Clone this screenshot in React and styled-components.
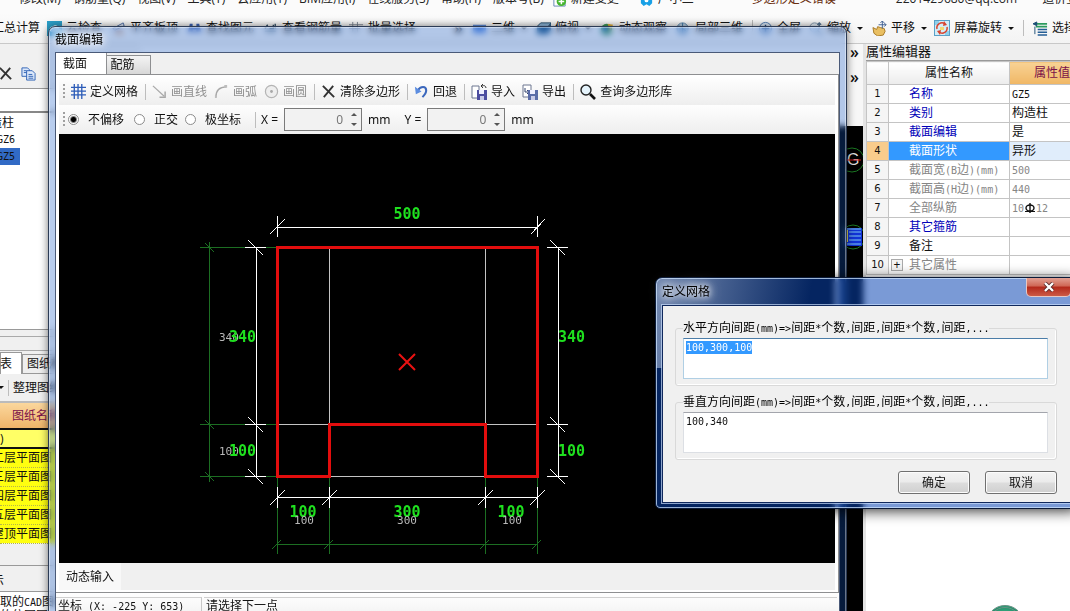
import { useEffect, useRef, useState } from "react";
import styled, { createGlobalStyle, css } from "styled-components";

const GlobalStyle = createGlobalStyle`
  * {
    box-sizing: border-box;
  }
  html, body, #root {
    height: 100%;
    margin: 0;
  }
  body {
    overflow: hidden;
    font-family: "Open Sans", "Noto Sans CJK SC", sans-serif;
    font-size: 12px;
    line-height: 16px;
    color: #111;
    background: #f0f0f0;
  }
  button, input, textarea {
    font: inherit;
    color: inherit;
    margin: 0;
  }
`;

/* ---------- shared bits ---------- */

const Half = styled.span`
  font-family: "DejaVu Sans Mono", monospace;
  font-size: 10px;
`;

// latin runs take half the width of a chinese character
function Mixed({ children }) {
  const parts = children.split(/([\x20-\x7e]+)/).filter(Boolean);
  return parts.map((p, i) =>
    /^[\x20-\x7e]/.test(p) ? <Half key={i}>{p}</Half> : p
  );
}

const PlainButton = styled.button`
  border: 0;
  padding: 0;
  background: none;
  display: flex;
  align-items: center;
  white-space: nowrap;
`;

const Arrow = styled.span`
  width: 8px;
  display: flex;
  justify-content: flex-end;
  &::after {
    content: "";
    border: 3px solid transparent;
    border-top-color: #111;
    border-bottom: 0;
  }
`;

const Svg = ({ children, size = 15, box = 16 }) => (
  <svg
    width={size}
    height={size}
    viewBox={`0 0 ${box} ${box}`}
    fill="none"
    aria-hidden="true"
    style={{ flex: "none" }}
  >
    {children}
  </svg>
);

const icons = {
  cloud: (
    <Svg>
      <rect width="16" height="16" fill="#2a9fc9" />
      <path d="M3 10a3 3 0 0 1 3-4 4 4 0 0 1 7 2 2 2 0 0 1 0 4H5z" fill="#fff" />
    </Svg>
  ),
  level: (
    <Svg>
      <path d="M2 8 13 2l1 3L4 10z" fill="#dfe8f6" stroke="#4d6fa8" />
      <path d="M5 11h8v3H5z" fill="#d99a6c" />
    </Svg>
  ),
  binoculars: (
    <Svg>
      <path d="M3 3h3v4h4V3h3l2 9h-5V9H6v3H1z" fill="#3f66b8" />
    </Svg>
  ),
  steel: (
    <Svg>
      <path d="M2 8l3-4M7 8h4V4M13 8V3M2 11h12" stroke="#2b4a63" strokeWidth="1.4" />
    </Svg>
  ),
  batch: (
    <Svg>
      <path d="M0 4h15M0 8h12M4 1v12M9 1v12" stroke="#7b8592" />
    </Svg>
  ),
  plane2d: (
    <Svg>
      <rect x="1" y="4" width="14" height="9" fill="#5f8fe0" />
    </Svg>
  ),
  topview: (
    <Svg>
      <path d="M5 2h11l-3 4H1z" fill="#8fb8dc" stroke="#1d4668" />
      <path d="M1 6h12v8H1zM13 6l3-4v8l-3 4" fill="#2c6391" />
    </Svg>
  ),
  orbit: (
    <Svg>
      <circle cx="7" cy="9" r="6" fill="#3d9a5b" />
      <path d="M8 3l6 1-3 6z" fill="#e8b43a" />
      <path d="M3 6h5v5H3z" fill="#2d6fc0" />
    </Svg>
  ),
  local3d: (
    <Svg>
      <circle cx="7" cy="8" r="6" fill="#b9cfe2" stroke="#5a86ad" />
      <path d="M7 2v12M3 5l8 6" stroke="#3f77a8" />
    </Svg>
  ),
  fullscreen: (
    <Svg>
      <circle cx="8" cy="8" r="6.5" fill="#dce9f7" stroke="#4c79ae" />
      <path d="M8 4v8M4 8h8" stroke="#234a80" strokeWidth="1.5" />
    </Svg>
  ),
  zoom: (
    <Svg>
      <circle cx="7" cy="7" r="5" fill="#e7f0f8" stroke="#7e95aa" />
      <path d="M12 2v5M10 4l2-2 2 2M11 11l4 4" stroke="#51718f" strokeWidth="1.4" />
    </Svg>
  ),
  pan: (
    <Svg>
      <path
        d="M1 7l4 2 1-3 3 1 4 1 1 3-2 4-6 1-4-3z"
        fill="#e9bf62"
        stroke="#a67722"
      />
      <path d="M11 0v8M7 4h8M9 2l2-2 2 2M13 2l2 2-2 2" stroke="#3d5d90" />
    </Svg>
  ),
  rotate: (
    <Svg size={16}>
      <rect x=".5" y=".5" width="15" height="15" fill="#d4ecf6" stroke="#5aa1c8" />
      <path d="M1 1h4v4H1zM11 11h4v4h-4z" fill="#8fd0ec" />
      <path
        d="M3 9a5 5 0 0 1 8-5M13 7a5 5 0 0 1-8 5"
        stroke="#d8432f"
        strokeWidth="1.5"
      />
      <path d="M10 1l3 4-4 1zM6 15l-3-4 4-1z" fill="#d8432f" />
      <path d="M6 7h4v3H6z" fill="#f3d873" />
    </Svg>
  ),
  floors: (
    <Svg>
      <path d="M3 3h12M3 6h12" stroke="#2c9a5e" strokeWidth="2" />
      <path d="M5 9h10M5 12h10M5 15h10" stroke="#255e95" strokeWidth="1.6" />
      <path d="M0 3l4-2v4zM2 6v8" stroke="#1b4d75" fill="#1b4d75" />
    </Svg>
  ),
  create: (
    <Svg>
      <path d="M2 0h9l3 3v12H2z" fill="#fff" stroke="#6486b4" />
      <circle cx="10" cy="10" r="5" fill="#45b52f" />
      <path d="M10 7v6M7 10h6" stroke="#fff" strokeWidth="1.6" />
    </Svg>
  ),
  assistant: (
    <Svg>
      <path d="M2 4h12v8l-3 3-3-2-3 2-3-3z" fill="#18a0e6" />
      <circle cx="8" cy="9" r="2" fill="#fff" />
    </Svg>
  ),
  grid: (
    <Svg>
      <path
        d="M0 3.5h16M0 7.5h16M0 11.5h16M3.5 0v16M7.5 0v16M11.5 0v16"
        stroke="#2c5cb8"
        strokeWidth="1.4"
      />
    </Svg>
  ),
  line: (
    <Svg>
      <path d="M1 2l12 11" stroke="#a8a8a8" strokeWidth="1.3" />
      <path d="M8 14h6V8" stroke="#a8a8a8" strokeWidth="1.6" />
    </Svg>
  ),
  arc: (
    <Svg>
      <path d="M2 14C2 7 6 3 13 3" stroke="#a8a8a8" strokeWidth="1.4" />
      <path d="M1 12h2v3H1zM11 1h3v3h-3z" fill="#bdbdbd" />
    </Svg>
  ),
  circle: (
    <Svg>
      <circle cx="8" cy="8" r="6.5" fill="#eee" stroke="#b4b4b4" strokeWidth="1.3" />
      <circle cx="8" cy="8" r="1.5" fill="#a8a8a8" />
    </Svg>
  ),
  cross: (
    <Svg>
      <path d="M2 2l12 12M13 2 3 14" stroke="#333" strokeWidth="2" />
    </Svg>
  ),
  undo: (
    <Svg>
      <path d="M4 7c3-5 9-5 9 0 0 3-2 5-4 7" stroke="#3c68bd" strokeWidth="2.2" />
      <path d="M1 3l1 8 6-3z" fill="#5c8de0" />
    </Svg>
  ),
  importFile: (
    <Svg size={16}>
      <path d="M1 2h7v12H1z" fill="#fff" stroke="#6d7690" />
      <path d="M6 6h10v10H6z" fill="#4c4da0" />
      <path d="M8 6h5v4H8z" fill="#eef" />
      <path d="M9 12h4v4H9z" fill="#c9cbe8" />
      <path d="M15 4c0-2-2-3-4-2M12 0l-2 2 2 2" stroke="#333" />
    </Svg>
  ),
  exportFile: (
    <Svg size={16}>
      <path d="M1 1h8v12H1z" fill="#fff" stroke="#6d7690" />
      <path d="M3 4v4h4M5 6l2 2-2 2" stroke="#34456e" />
      <path d="M6 6h10v10H6z" fill="#5a6ca8" />
      <path d="M8 6h5v4H8z" fill="#eef" />
      <path d="M9 12h4v4H9z" fill="#c9cbe8" />
    </Svg>
  ),
  search: (
    <Svg size={16}>
      <circle cx="6" cy="6" r="5" fill="#e5f3fb" stroke="#222" strokeWidth="1.4" />
      <path d="M10 10l5 5" stroke="#111" strokeWidth="2.6" />
    </Svg>
  ),
  copy: (
    <Svg>
      <path d="M1 2h6l2 2v7H1z" fill="#dce8fa" stroke="#2f62b5" />
      <path d="M6 5h6l3 3v7H6z" fill="#dce8fa" stroke="#2f62b5" />
      <path d="M3 5h3M3 7h3M8 9h4M8 11h5M8 13h5" stroke="#2f62b5" />
    </Svg>
  ),
};

/* ---------- main window ---------- */

const Desktop = styled.div`
  position: relative;
  height: 100%;
  overflow: hidden;
  display: flex;
  flex-direction: column;
`;

const MenuBar = styled.nav`
  flex: 0 0 13px;
  display: flex;
  align-items: flex-end;
  gap: 12px;
  padding-bottom: 6px;
  background: #fbfbfb;
  overflow: hidden;
  white-space: nowrap;
`;

const MenuItem = styled(PlainButton)`
  gap: 4px;
  height: 16px;
  flex: none;
  color: ${(p) => p.$color || "#222"};
  margin-left: ${(p) => p.$space || 0}px;
`;

const MainToolbar = styled.div`
  flex: 0 0 31px;
  display: flex;
  align-items: center;
  gap: 9px;
  background: linear-gradient(#fbfbfb, #f3f3f3);
  border-bottom: 1px solid #c8c8c8;
  overflow: hidden;
`;

const MainTool = styled(PlainButton)`
  flex: none;
  gap: 4px;
  margin-left: ${(p) => p.$space || 0}px;
`;

const More = styled(PlainButton)`
  font-size: 16px;
  font-weight: 600;
  line-height: 16px;
  flex: none;
  margin-left: ${(p) => p.$space || 0}px;
  justify-content: flex-end;
`;

const Divider = styled.span`
  flex: none;
  width: 1px;
  height: 16px;
  background: #bdbdbd;
`;

const Workspace = styled.div`
  flex: 1;
  min-height: 0;
  display: flex;
`;

/* left dock */

const Dock = styled.aside`
  flex: 0 0 140px;
  display: flex;
  flex-direction: column;
  overflow: hidden;
  white-space: nowrap;
  > * {
    flex-shrink: 0;
  }
`;

const DockTools = styled.div`
  height: 45px;
  padding-top: 15px;
  display: flex;
  align-items: center;
  gap: 8px;
  margin-left: -2px;
  border-bottom: 1px solid #999;
`;

const DockSearch = styled.input`
  height: 24px;
  border: 0;
  border-bottom: 2px solid #888;
  background: #fff;
`;

const Tree = styled.ul`
  list-style: none;
  height: 217px;
  margin: 0;
  padding: 2px 0 0;
  background: #fff;
  border-bottom: 1px solid #999;
`;

const TreeItem = styled.li`
  line-height: 16px;
  width: 20px;
  text-indent: ${(p) => (p.$root ? -22 : -3)}px;
  background: ${(p) => (p.$selected ? "#316ac5" : "none")};
`;

const Splitter = styled.div`
  height: ${(p) => p.$height}px;
  border-bottom: 1px solid #aaa;
`;

const DockTabs = styled.div`
  display: flex;
  height: 23px;
  align-items: flex-end;
`;

const DockTab = styled(PlainButton)`
  height: 20px;
  padding: 0 4px;
  border: 1px solid #999;
  background: ${(p) => (p.$active ? "#fff" : "#eee")};
  ${(p) =>
    p.$active &&
    css`
      border-bottom: 0;
      height: 22px;
      width: 22px;
      padding: 0 9px 0 0;
      justify-content: flex-end;
    `}
`;

const DockBar = styled.div`
  height: 29px;
  display: flex;
  align-items: center;
  gap: 4px;
  border-bottom: 2px solid #bbb;
`;

const DockArrow = styled(Arrow)`
  width: 4px;
`;

const Sheets = styled.table`
  border-collapse: collapse;
  width: 100%;
  th {
    height: 26px;
    padding: 0 0 0 12px;
    text-align: left;
    font-weight: normal;
    color: #7a1048;
    background: linear-gradient(#fbd79d, #efb469);
    border-bottom: 2px solid #111;
  }
  td {
    height: 19px;
    padding: 0;
    background: #ffff10;
    border-bottom: 1px dotted #b5b54a;
  }
  tr.current td {
    background: #ffff66;
    border-bottom: 2px solid #111;
  }
`;

const Pull = styled.span`
  display: block;
  margin-left: -8px;
`;

const HintTitle = styled.div`
  margin-top: 21px;
  height: 27px;
  border-top: 1px solid #999;
  border-bottom: 1px solid #999;
  padding-top: 7px;
`;

const Hints = styled.div`
  flex: 1;
  padding-top: 3px;
  line-height: 13px;
  background: #fff;
`;

/* model view */

const ModelView = styled.main`
  flex: 1;
  min-width: 0;
  display: flex;
  flex-direction: column;
`;

const ViewBars = styled.div`
  height: 82px;
  display: flex;
  flex-direction: column;
  padding-right: 4px;
  background: #f7f7f7;
`;

const ViewBar = styled.div`
  height: ${(p) => p.$height}px;
  display: flex;
  align-items: center;
  justify-content: flex-end;
`;

const Model = styled.div`
  flex: 1;
  display: flex;
  justify-content: flex-end;
  background: #000;
`;

/* property panel */

const Properties = styled.aside`
  flex: 0 0 207px;
  overflow: hidden;
  background: #fff;
  border-left: 3px solid #e4e4e4;
`;

const PanelTitle = styled.h2`
  margin: 0;
  height: 17px;
  font-size: 13px;
  line-height: 14px;
  font-weight: normal;
  white-space: nowrap;
  background: #eeeeee;
  border-bottom: 1px solid #999;
`;

const PropTable = styled.table`
  border-collapse: collapse;
  table-layout: fixed;
  width: 228px;
  line-height: 14px;
  white-space: nowrap;
  th, td {
    padding: 0 2px;
    height: 19px;
    border: 1px solid #c4c4c4;
    font-weight: normal;
    overflow: hidden;
  }
  thead th {
    height: 23px;
    background: linear-gradient(#fff, #ececec);
    text-align: center;
  }
  thead th:last-child {
    color: #7a1048;
    background: linear-gradient(#f8d294, #f0b765);
  }
`;

const RowNumber = styled.th`
  text-align: center;
  font-family: "DejaVu Sans", sans-serif;
  font-size: 10px;
  background: ${(p) => (p.$selected ? "#f9cc8c" : "#f5f5f5")};
`;

const tones = { link: "#0000b8", off: "#858585", normal: "#111" };

const NameCell = styled.td`
  color: ${(p) => (p.$selected ? "#fff" : tones[p.$tone])};
  background: ${(p) => (p.$selected ? "#3399ff" : "#fff")};
`;

const NameLine = styled.span`
  display: flex;
  align-items: center;
  padding-left: ${(p) => (p.$expandable ? 0 : 18)}px;
`;

const Expand = styled(PlainButton)`
  width: 12px;
  height: 12px;
  margin-right: 6px;
  justify-content: center;
  border: 1px solid #aaa;
  background: #f4f4f4;
  color: #111;
  line-height: 10px;
`;

const ValueCell = styled.td`
  color: ${(p) => (p.$tone === "off" ? "#858585" : "#111")};
  background: ${(p) => (p.$selected ? "#e0edfb" : "#fff")};
  svg {
    vertical-align: middle;
  }
`;

const HelperBall = styled.button`
  position: absolute;
  right: 46px;
  bottom: -32px;
  width: 38px;
  height: 38px;
  padding: 0;
  border: 3px double #6b8f84;
  border-radius: 50%;
  background: radial-gradient(#5fd0a0, #0f7f5c);
`;

/* ---------- floating windows ---------- */

const Glass = styled.section`
  position: absolute;
  display: flex;
  flex-direction: column;
  border: 1px solid #2c3b55;
  border-radius: 7px 7px 5px 5px;
  backdrop-filter: blur(3px);
`;

const EditorWindow = styled(Glass)`
  left: 48px;
  right: 223px;
  top: 26px;
  bottom: -14px;
  padding: 0 6px 6px;
  background: rgba(20, 90, 200, 0.3);
  box-shadow: 0 0 9px rgba(0, 0, 0, 0.55), inset 0 0 0 1px rgba(255, 255, 255, 0.4);
`;

const TitleBar = styled.header`
  flex: none;
  height: ${(p) => p.$height}px;
  display: flex;
  align-items: center;
`;

const TitleText = styled.h1`
  margin: 0;
  font-size: 12px;
  line-height: 16px;
  font-weight: normal;
  color: #000;
  text-shadow: 0 0 6px #fff, 0 0 10px #fff, 0 0 14px rgba(255, 255, 255, 0.8);
`;

const EditorBody = styled.div`
  flex: 1;
  min-height: 0;
  display: flex;
  flex-direction: column;
  border: 1px solid #4a5a78;
  background: #f0f0f0;
`;

const Tabs = styled.div`
  flex: none;
  height: 21px;
  display: flex;
  align-items: flex-end;
`;

const Tab = styled(PlainButton)`
  justify-content: center;
  height: ${(p) => (p.$active ? 21 : 19)}px;
  width: ${(p) => (p.$active ? 51 : 44)}px;
  padding-right: ${(p) => (p.$active ? 12 : 12)}px;
  border: 1px solid #8e8f91;
  border-width: ${(p) => (p.$active ? "0 1px 0 0" : "1px 1px 0 0")};
  background: ${(p) => (p.$active ? "#fff" : "linear-gradient(#f4f4f4, #d8d8d8)")};
`;

const Page = styled.div`
  flex: 1;
  min-height: 0;
  display: flex;
  flex-direction: column;
  padding: 3px 3px 2px;
  background: #fff;
  border: 1px solid #8e8f91;
  border-left: 0;
`;

const ToolRow = styled.div`
  flex: none;
  height: ${(p) => p.$height}px;
  display: flex;
  align-items: center;
  gap: ${(p) => p.$gap}px;
  padding-left: 4px;
  white-space: nowrap;
  background: linear-gradient(#fefefe, #eeeeee);
`;

const Grip = styled.span`
  width: 2px;
  height: 16px;
  flex: none;
  background: repeating-linear-gradient(#a0a0a0 0 2px, transparent 2px 4px);
  margin-right: ${(p) => p.$space || 0}px;
`;

const ToolDivider = styled(Divider)`
  margin-right: -1px;
`;

const Tool = styled(PlainButton)`
  gap: 4px;
  &:disabled {
    color: #8f8f8f;
  }
`;

const RadioLabel = styled.label`
  display: flex;
  align-items: center;
  gap: 9px;
  margin-right: ${(p) => p.$space || 0}px;
`;

const Radio = styled.input`
  appearance: none;
  width: 11px;
  height: 11px;
  border: 1px solid #8c8c8c;
  border-radius: 50%;
  background: #fff;
  &:checked {
    background: radial-gradient(#000 0 2px, #fff 4px);
  }
`;

const Field = styled.label`
  display: flex;
  align-items: center;
  gap: 6px;
  font-family: "Noto Sans", "Open Sans", sans-serif;
  margin-left: ${(p) => p.$space || 0}px;
`;

const Spin = styled.span`
  display: flex;
  width: 78px;
  height: 23px;
  border: 1px solid #7a7a7a;
  background: #f2f2f2;
`;

const SpinInput = styled.input`
  flex: 1;
  min-width: 0;
  border: 0;
  padding: 0 4px 0 0;
  background: none;
  text-align: right;
  color: #777;
  outline: 0;
`;

const SpinButtons = styled.span`
  width: 14px;
  display: flex;
  flex-direction: column;
  justify-content: space-between;
  align-items: center;
  padding: 4px 0;
`;

const SpinButton = styled.button`
  width: 6px;
  height: 3px;
  padding: 0;
  border: 3px solid transparent;
  border-top-width: ${(p) => (p.$up ? 0 : 3)}px;
  border-bottom-width: ${(p) => (p.$up ? 3 : 0)}px;
  border-top-color: #555;
  border-bottom-color: #555;
  background: none;
`;

const Canvas = styled.div`
  flex: 1;
  min-height: 0;
  display: flex;
  overflow: hidden;
  background: #000;
  svg {
    flex: none;
  }
`;

const BottomBar = styled.div`
  flex: none;
  height: 27px;
  display: flex;
  background: #f0f0f0;
`;

const InputToggle = styled(PlainButton)`
  padding: 0 7px;
  background: #f8f8f8;
`;

const StatusBar = styled.footer`
  flex: none;
  height: 24px;
  display: flex;
  padding-top: 4px;
  background: linear-gradient(#fff, #f2f2f2);
`;

const StatusCell = styled.span`
  min-width: ${(p) => p.$width || 0}px;
  padding-left: 2px;
  margin-right: 2px;
  border-top: 1px solid #d0d0d0;
  border-right: ${(p) => (p.$width ? "1px solid #c8c8c8" : "0")};
  flex: ${(p) => (p.$width ? "none" : "1")};
  white-space: pre;
`;

const GridDialog = styled(Glass)`
  right: -8px;
  top: 277px;
  width: 423px;
  padding: 0 6px 5px;
  border-color: #0b1a38;
  background: linear-gradient(100deg, rgba(190, 205, 230, 0.6), transparent 36%) 0 0 /
      100% 90px no-repeat,
    rgba(10, 68, 180, 0.54);
  box-shadow: 0 2px 14px rgba(0, 0, 0, 0.8), inset 0 0 0 1px rgba(205, 228, 255, 0.75);
`;

const CloseButton = styled.button`
  align-self: flex-start;
  margin-left: auto;
  width: 45px;
  height: 19px;
  padding: 0;
  display: flex;
  align-items: center;
  justify-content: center;
  border: 1px solid #e8c7c2;
  border-top: 0;
  border-radius: 0 0 5px 5px;
  background: linear-gradient(#e2a093, #cf6654 45%, #b3281a 50%, #cc5a45);
`;

const DialogBody = styled.form`
  padding: 14px 13px 8px 12px;
  border: 1px solid #10285c;
  outline: 1px solid rgba(200, 220, 250, 0.7);
  background: #f0f0f0;
`;

const Group = styled.fieldset`
  margin: 0 0 8px;
  padding: 2px 8px 6px 7px;
  border: 1px solid #d9d9d9;
  border-radius: 3px;
  box-shadow: inset -1px -1px #fff;
  legend {
    padding: 0;
    height: 16px;
    color: #000;
    white-space: nowrap;
  }
`;

const Spacing = styled.textarea`
  display: block;
  width: 100%;
  height: 41px;
  padding: 2px;
  resize: none;
  border: 1px solid #dcdfe4;
  border-top-color: #a3a5ac;
  outline: 0;
  font-family: "DejaVu Sans Mono", monospace;
  font-size: 10px;
  line-height: 13px;
  background: #fff;
  &:focus {
    border-color: #b0cfe4;
    border-top-color: #4b7da8;
  }
  &::selection {
    color: #fff;
    background: #3399ff;
  }
`;

const DialogButtons = styled.div`
  display: flex;
  justify-content: flex-end;
  gap: 15px;
  margin-top: 11px;
`;

const PushButton = styled.button`
  width: 72px;
  height: 23px;
  padding: 0;
  border: 1px solid #707070;
  border-radius: 3px;
  box-shadow: inset 0 0 0 1px #fcfcfc;
  background: linear-gradient(#f3f3f3, #ebebeb 48%, #dddddd 52%, #cfcfcf);
`;

/* ---------- data ---------- */

const menus = [
  { text: "修改(M)", space: 19 },
  { text: "钢筋量(Q)" },
  { text: "视图(V)" },
  { text: "工具(T)" },
  { text: "云应用(Y)" },
  { text: "BIM应用(I)" },
  { text: "在线服务(S)" },
  { text: "帮助(H)" },
  { text: "版本号(B)" },
  { text: "新建变更", icon: "create", space: -4 },
  { text: "广小二", icon: "assistant", space: 8 },
  { text: "多边形定义错误", color: "#6a2f10", space: 46 },
  { text: "2201429680@qq.com", space: 48 },
  { text: "造价豆:0", space: 13 },
];

const mainTools = [
  { text: "云检查", icon: "cloud", space: -2 },
  { text: "平齐板顶", icon: "level" },
  { text: "查找图元", icon: "binoculars" },
  { text: "查看钢筋量", icon: "steel" },
  { text: "批量选择", icon: "batch", space: -2 },
];

const viewTools = [
  { text: "二维", icon: "plane2d", arrow: true },
  { text: "俯视", icon: "topview", arrow: true },
  { text: "动态观察", icon: "orbit" },
  { text: "局部三维", icon: "local3d" },
  null,
  { text: "全屏", icon: "fullscreen", space: -4 },
  { text: "缩放", icon: "zoom", arrow: true, space: -2 },
  { text: "平移", icon: "pan", arrow: true },
  { text: "屏幕旋转", icon: "rotate", arrow: true, space: -2 },
];

const sheets = ["二层平面图", "三层平面图", "四层平面图", "五层平面图", "屋顶平面图"];

const properties = [
  { name: "名称", value: "GZ5", tone: "link" },
  { name: "类别", value: "构造柱", tone: "link" },
  { name: "截面编辑", value: "是", tone: "link" },
  { name: "截面形状", value: "异形", tone: "link", selected: true },
  { name: "截面宽(B边)(mm)", value: "500", tone: "off" },
  { name: "截面高(H边)(mm)", value: "440", tone: "off" },
  { name: "全部纵筋", rebar: ["10", "12"], tone: "off" },
  { name: "其它箍筋", value: "", tone: "link" },
  { name: "备注", value: "", tone: "normal" },
  { name: "其它属性", value: "", tone: "off", expandable: true },
];

const sectionTools = [
  { text: "定义网格", icon: "grid" },
  null,
  { text: "画直线", icon: "line", disabled: true },
  { text: "画弧", icon: "arc", disabled: true },
  { text: "画圆", icon: "circle", disabled: true },
  null,
  { text: "清除多边形", icon: "cross" },
  null,
  { text: "回退", icon: "undo" },
  null,
  { text: "导入", icon: "importFile" },
  { text: "导出", icon: "exportFile" },
  null,
  { text: "查询多边形库", icon: "search" },
];

const modes = [
  { id: "none", text: "不偏移", space: 4 },
  { id: "ortho", text: "正交", space: 1 },
  { id: "polar", text: "极坐标", space: 8 },
];

/* ---------- parts ---------- */

function ToolItem({ tool }) {
  return (
    <MainTool $space={tool.space}>
      {icons[tool.icon]}
      {tool.text}
      {tool.arrow && <Arrow />}
    </MainTool>
  );
}

function LeftDock() {
  return (
    <Dock>
      <DockTools>
        <PlainButton aria-label="删除">{icons.cross}</PlainButton>
        <PlainButton aria-label="复制">{icons.copy}</PlainButton>
      </DockTools>
      <DockSearch aria-label="搜索构件" />
      <Tree>
        <TreeItem $root>构造柱</TreeItem>
        <TreeItem>
          <Half>GZ6</Half>
        </TreeItem>
        <TreeItem $selected>
          <Half>GZ5</Half>
        </TreeItem>
      </Tree>
      <Splitter $height={7} />
      <Splitter $height={14} />
      <DockTabs>
        <DockTab $active>图纸列表</DockTab>
        <DockTab>图纸楼层对照表</DockTab>
      </DockTabs>
      <DockBar>
        <DockArrow />
        <Divider />
        <PlainButton>整理图纸</PlainButton>
      </DockBar>
      <Sheets>
        <thead>
          <tr>
            <th>图纸名称</th>
          </tr>
        </thead>
        <tbody>
          <tr className="current">
            <td>)</td>
          </tr>
          {sheets.map((s) => (
            <tr key={s}>
              <td>
                <Pull>{s}</Pull>
              </td>
            </tr>
          ))}
        </tbody>
      </Sheets>
      <HintTitle>
        <Pull>示</Pull>
      </HintTitle>
      <Hints>
        <Mixed>取的CAD图元</Mixed>
        <br />
        的位图同
      </Hints>
    </Dock>
  );
}

function RebarMark() {
  return (
    <svg width="12" height="10" viewBox="0 0 12 10" fill="none" aria-hidden="true">
      <ellipse cx="6" cy="5" rx="4" ry="3" stroke="#111" strokeWidth="1.4" />
      <path d="M6 0v10" stroke="#111" strokeWidth="1.4" />
      <path d="M1 8.5h10" stroke="#111" />
    </svg>
  );
}

function PropertyPanel() {
  return (
    <Properties>
      <PanelTitle>属性编辑器</PanelTitle>
      <PropTable>
        <colgroup>
          <col width="22" />
          <col width="121" />
          <col width="85" />
        </colgroup>
        <thead>
          <tr>
            <th />
            <th>属性名称</th>
            <th>属性值</th>
          </tr>
        </thead>
        <tbody>
          {properties.map((row, i) => (
            <tr key={row.name}>
              <RowNumber $selected={row.selected}>{i + 1}</RowNumber>
              <NameCell $tone={row.tone} $selected={row.selected}>
                <NameLine $expandable={row.expandable}>
                  {row.expandable && <Expand>+</Expand>}
                  <span>
                    <Mixed>{row.name}</Mixed>
                  </span>
                </NameLine>
              </NameCell>
              <ValueCell $tone={row.tone} $selected={row.selected}>
                {row.rebar ? (
                  <>
                    <Half>{row.rebar[0]}</Half>
                    <RebarMark />
                    <Half>{row.rebar[1]}</Half>
                  </>
                ) : (
                  <Mixed>{row.value}</Mixed>
                )}
              </ValueCell>
            </tr>
          ))}
        </tbody>
      </PropTable>
    </Properties>
  );
}

const DimText = styled.text`
  font-family: "DejaVu Sans Mono", monospace;
  font-weight: bold;
  font-size: 15px;
  fill: #1fe01f;
`;

const GridText = styled.text`
  font-family: "DejaVu Sans Mono", monospace;
  font-size: 11px;
  fill: #b8b8b8;
`;

const xs = [277, 329, 485, 537];
const ys = [247, 424, 476];

function SectionDrawing() {
  return (
    <svg width="776" height="430" viewBox="59 134 776 430">
      <g stroke="#1c6e22" shapeRendering="crispEdges">
        <path d="M209.5 242V482M277 544.5H538" />
        {ys.map((y) => (
          <path key={y} d={`M200 ${y + 0.5}h78M205 ${y - 4}l9 9`} />
        ))}
        {xs.map((x) => (
          <path key={x} d={`M${x + 0.5} 477v77M${x - 5} 549l9 -9`} />
        ))}
      </g>
      <g stroke="#c4c4c4" shapeRendering="crispEdges">
        <path d="M329.5 248V424M485.5 248V424M278 424.5H330M485 424.5H537M330 476.5H485" />
      </g>
      <g stroke="#fff" shapeRendering="crispEdges">
        <path d="M277 227.5H538M277 497.5H538M256.5 247V476M558.5 247V476" />
        {ys.map((y) => (
          <path
            key={y}
            d={`M245 ${y + 0.5}h21M248 ${y - 7}l15 15M547 ${y + 0.5}h21M550 ${y - 7}l15 15`}
          />
        ))}
        {xs.map((x) => (
          <path key={x} d={`M${x + 0.5} 487v21M${x - 7} 505l15 -15`} />
        ))}
        <path d="M277.5 216v21M270 234l15 -15M537.5 216v21M531 234l14 -15" />
      </g>
      <path
        d="M277.5 247.5H537.5V476.5H485.5V424.5H329.5V476.5H277.5Z"
        fill="none"
        stroke="#e30d0d"
        strokeWidth="3"
        shapeRendering="crispEdges"
      />
      <path d="M399 354l16 16M415 354l-16 16" stroke="#ea1212" strokeWidth="2" />
      <GridText x="219" y="341">340</GridText>
      <GridText x="219" y="455">100</GridText>
      <DimText x="229" y="342">340</DimText>
      <DimText x="229" y="456">100</DimText>
      <DimText x="558" y="342">340</DimText>
      <DimText x="558" y="456">100</DimText>
      <g textAnchor="middle">
        <DimText x="407" y="219">500</DimText>
        <DimText x="303" y="517">100</DimText>
        <DimText x="407" y="517">300</DimText>
        <DimText x="511" y="517">100</DimText>
        <GridText x="304" y="524">100</GridText>
        <GridText x="407" y="524">300</GridText>
        <GridText x="512" y="524">100</GridText>
      </g>
    </svg>
  );
}

function Offset({ label, space }) {
  const [value, setValue] = useState(0);
  return (
    <Field $space={space}>
      {label} =
      <Spin>
        <SpinInput
          aria-label={label}
          value={value}
          onChange={(e) => setValue(Number(e.target.value) || 0)}
        />
        <SpinButtons>
          <SpinButton
            $up
            type="button"
            aria-label="增加"
            onClick={() => setValue(value + 1)}
          />
          <SpinButton
            type="button"
            aria-label="减少"
            onClick={() => setValue(value - 1)}
          />
        </SpinButtons>
      </Spin>
      mm
    </Field>
  );
}

function SectionEditor() {
  const [mode, setMode] = useState("none");
  return (
    <EditorWindow>
      <TitleBar $height={25}>
        <TitleText>截面编辑</TitleText>
      </TitleBar>
      <EditorBody>
        <Tabs>
          <Tab $active>截面</Tab>
          <Tab>配筋</Tab>
        </Tabs>
        <Page>
          <ToolRow $height={27} $gap={7}>
            <Grip $space={-1} />
            {sectionTools.map((t, i) =>
              t ? (
                <Tool key={i} disabled={t.disabled}>
                  {icons[t.icon]}
                  {t.text}
                </Tool>
              ) : (
                <ToolDivider key={i} />
              )
            )}
          </ToolRow>
          <ToolRow $height={29} $gap={6}>
            <Grip $space={-3} />
            {modes.map((m) => (
              <RadioLabel key={m.id} $space={m.space}>
                <Radio
                  type="radio"
                  name="mode"
                  checked={mode === m.id}
                  onChange={() => setMode(m.id)}
                />
                {m.text}
              </RadioLabel>
            ))}
            <Divider />
            <Offset label="X" space={-1} />
            <Offset label="Y" space={8} />
          </ToolRow>
          <Canvas>
            <SectionDrawing />
          </Canvas>
          <BottomBar>
            <InputToggle>动态输入</InputToggle>
          </BottomBar>
        </Page>
        <StatusBar>
          <StatusCell $width={146}>
            <Mixed>坐标 (X: -225 Y: 653)</Mixed>
          </StatusCell>
          <StatusCell>请选择下一点</StatusCell>
        </StatusBar>
      </EditorBody>
    </EditorWindow>
  );
}

const hint = "方向间距(mm)=>间距*个数,间距,间距*个数,间距,...";

function DefineGrid() {
  const [horizontal, setHorizontal] = useState("100,300,100");
  const [vertical, setVertical] = useState("100,340");
  const first = useRef(null);

  useEffect(() => {
    first.current.focus();
    first.current.select();
  }, []);

  return (
    <GridDialog role="dialog" aria-label="定义网格">
      <TitleBar $height={27}>
        <TitleText>定义网格</TitleText>
        <CloseButton aria-label="关闭">
          <svg width="12" height="10" viewBox="0 0 12 10" aria-hidden="true">
            <path d="M2 1l8 8M10 1 2 9" stroke="#5b2a2a" strokeWidth="4" />
            <path d="M2 1l8 8M10 1 2 9" stroke="#fff" strokeWidth="2.4" />
          </svg>
        </CloseButton>
      </TitleBar>
      <DialogBody onSubmit={(e) => e.preventDefault()}>
        <Group>
          <legend>
            <label htmlFor="horizontal">
              <Mixed>{"水平" + hint}</Mixed>
            </label>
          </legend>
          <Spacing
            id="horizontal"
            ref={first}
            value={horizontal}
            onChange={(e) => setHorizontal(e.target.value)}
          />
        </Group>
        <Group>
          <legend>
            <label htmlFor="vertical">
              <Mixed>{"垂直" + hint}</Mixed>
            </label>
          </legend>
          <Spacing
            id="vertical"
            value={vertical}
            onChange={(e) => setVertical(e.target.value)}
          />
        </Group>
        <DialogButtons>
          <PushButton type="submit">确定</PushButton>
          <PushButton type="button">取消</PushButton>
        </DialogButtons>
      </DialogBody>
    </GridDialog>
  );
}

export default function App() {
  return (
    <>
      <GlobalStyle />
      <Desktop>
        <MenuBar>
          {menus.map((m) => (
            <MenuItem key={m.text} $color={m.color} $space={m.space}>
              {m.icon && icons[m.icon]}
              {m.text}
            </MenuItem>
          ))}
        </MenuBar>
        <MainToolbar>
          <MainTool $space={-8}>汇总计算</MainTool>
          {mainTools.map((t) => (
            <ToolItem key={t.text} tool={t} />
          ))}
          <More $space={29} aria-label="更多">
            »
          </More>
          {viewTools.map((t, i) =>
            t ? <ToolItem key={i} tool={t} /> : <Divider key={i} />
          )}
          <Divider />
          <MainTool>
            {icons.floors}
            选择楼层
          </MainTool>
        </MainToolbar>
        <Workspace>
          <LeftDock />
          <ModelView>
            <ViewBars>
              <ViewBar $height={16}>
                <More aria-label="更多">»</More>
              </ViewBar>
              <ViewBar $height={34}>
                <More aria-label="更多">»</More>
              </ViewBar>
            </ViewBars>
            <Model>
              <svg width="18" height="140" viewBox="0 0 18 140" fill="none">
                <circle cx="7" cy="34" r="12" stroke="#1c7a24" />
                <text
                  x="2"
                  y="39"
                  fontFamily="Liberation Sans, sans-serif"
                  fontSize="16"
                  fill="#ddd"
                >
                  G
                </text>
                <path d="M1 34h15" stroke="#d01818" />
                <circle cx="8" cy="111" r="12" stroke="#1c7a24" />
                <path d="M0 102h17v18H0z" fill="#1133d6" />
                <path
                  d="M0 103h16M4 106h12M4 110h12M4 114h12M1 118h15"
                  stroke="#7fc9ee"
                />
                <path d="M2 104v12" stroke="#d8cf55" strokeWidth="2" />
              </svg>
            </Model>
          </ModelView>
          <PropertyPanel />
        </Workspace>
        <HelperBall aria-label="助手" />
        <SectionEditor />
        <DefineGrid />
      </Desktop>
    </>
  );
}
